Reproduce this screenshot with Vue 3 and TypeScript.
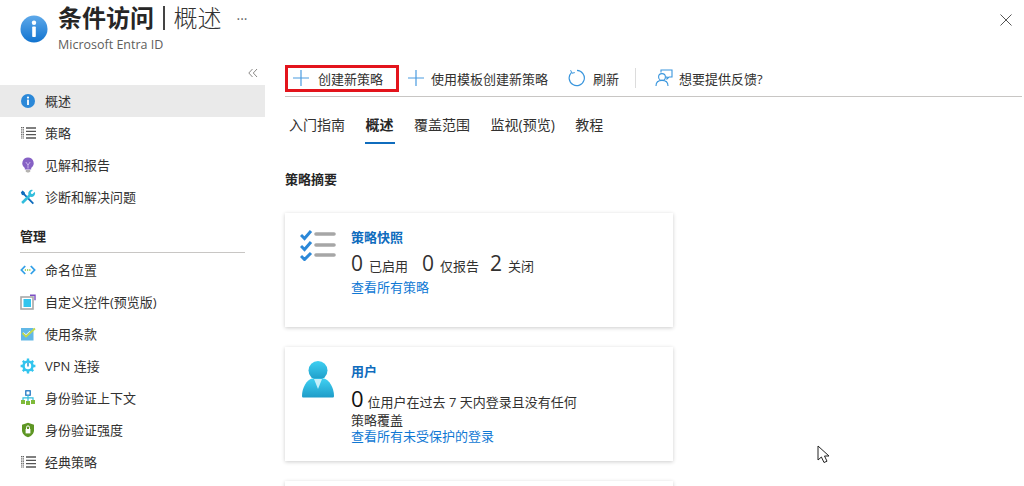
<script setup lang="ts">
const topNav = [
  { label: '概述', icon: 'info', active: true },
  { label: '策略', icon: 'list' },
  { label: '见解和报告', icon: 'bulb' },
  { label: '诊断和解决问题', icon: 'tools' },
]
const manageNav = [
  { label: '命名位置', icon: 'code' },
  { label: '自定义控件(预览版)', icon: 'control' },
  { label: '使用条款', icon: 'terms' },
  { label: 'VPN 连接', icon: 'gear' },
  { label: '身份验证上下文', icon: 'tree' },
  { label: '身份验证强度', icon: 'shield' },
  { label: '经典策略', icon: 'list' },
]
const tabs = ['入门指南', '概述', '覆盖范围', '监视(预览)', '教程']
</script>

<template>
  <div class="page">
    <header class="head">
      <svg class="head-icon" viewBox="0 0 28 28" width="28" height="28">
        <defs>
          <linearGradient id="ig" x1="0" y1="0" x2="0" y2="1">
            <stop offset="0" stop-color="#5ea9ea" /><stop offset="1" stop-color="#1173cf" />
          </linearGradient>
        </defs>
        <circle cx="14" cy="14" r="13.5" fill="url(#ig)" />
        <circle cx="14" cy="7.8" r="2.2" fill="#fff" />
        <rect x="12.200" y="11.500" width="3.600" height="10.500" rx="0.800" fill="#fff" />
      </svg>
      <div class="head-text">
        <div class="title-row">
          <span class="title-b">条件访问</span><span class="title-bar"></span><span class="title-l">概述</span>
          <span class="dots">···</span>
        </div>
        <div class="sub">Microsoft Entra ID</div>
      </div>
      <svg class="close" viewBox="0 0 12 12" width="12" height="12">
        <path d="M.5.5l11 11M11.5.5l-11 11" stroke="#555" stroke-width="1" fill="none" />
      </svg>
    </header>

    <div class="body">
      <aside class="side">
        <div class="collapse">
          <svg viewBox="0 0 10 10" width="10" height="10">
            <path d="M4.500 1L.8 5l3.700 4M9 1L5.300 5 9 9" stroke="#8a8886" fill="none" stroke-width="1" />
          </svg>
        </div>
        <template v-for="group in [topNav, manageNav]" :key="group[0].label">
          <div v-if="group === manageNav" class="section">管理</div>
          <div v-for="item in group" :key="item.label" class="nav" :class="{ active: item.active }">
            <svg class="nav-icon" viewBox="0 0 16 16" width="16" height="16">
              <template v-if="item.icon === 'info'">
                <circle cx="8" cy="8" r="7" fill="#2b88d8" />
                <circle cx="8" cy="4.600" r="1.100" fill="#fff" />
                <rect x="7.100" y="6.600" width="1.800" height="5.400" fill="#fff" />
              </template>
              <template v-else-if="item.icon === 'list'">
                <path d="M6 3h10M6 6.300h10M6 9.600h10M6 13h10" stroke="#555" stroke-width="1.300" />
                <path d="M1 2.500h3M1 4.200h3M1 6h3M1 7.700h3M1 9.400h3M1 11.100h3M1 13h3" stroke="#555" stroke-width=".9" stroke-dasharray="1.500 .5" />
              </template>
              <template v-else-if="item.icon === 'bulb'">
                <path d="M8 .6a5.700 5.700 0 0 0-3.200 10.400V12.400h6.400V11A5.700 5.700 0 0 0 8 .6z" fill="#8661c5" />
                <path d="M5.800 13h4.400v1.200L9 15.400H7l-1.200-1.200z" fill="#b5b3b1" />
                <path d="M5.800 5l2.200 3 2.200-3M8 8v3.500" stroke="#d9c9f2" fill="none" stroke-width=".8" />
              </template>
              <template v-else-if="item.icon === 'tools'">
                <path d="M2.500 1.500l2.200 1.800.4 1.800L14 14l-1.300 1.300L3.800 6.300 2 6 .8 3.400z" fill="#0f6cbd" />
                <path d="M14.800 2.800l-2.300 2.200-1.400-.3-.3-1.400L13 1a3.700 3.700 0 0 0-4.600 4.700L1.200 13l1.800 2 7.400-7.200a3.700 3.700 0 0 0 4.400-5z" fill="#32bedd" />
              </template>
              <template v-else-if="item.icon === 'code'">
                <path d="M5.200 4L1.400 8l3.800 4M10.800 4l3.800 4-3.800 4" stroke="#32a0e8" stroke-width="1.800" fill="none" />
                <path d="M4.800 8h6.400" stroke="#8cc63f" stroke-width="1.300" stroke-dasharray="1.200 1" />
              </template>
              <template v-else-if="item.icon === 'control'">
                <rect x="1" y="3" width="12" height="12" fill="none" stroke="#a8a8a8" stroke-width="1.600" />
                <rect x="3.500" y="5" width="7.500" height="8" fill="#32c5ee" />
                <path d="M10 1.200h5v5" fill="none" stroke="#7c4fc4" stroke-width="1.400" />
              </template>
              <template v-else-if="item.icon === 'terms'">
                <rect x="1" y="2" width="12.500" height="12.500" fill="#62b8e6" />
                <path d="M2.500 7l3.500 3.500L15 2.500" fill="none" stroke="#c3d94a" stroke-width="1.800" />
                <path d="M3.500 6.500l2.500 2.200L10 5" fill="none" stroke="#fff" stroke-width=".8" />
              </template>
              <template v-else-if="item.icon === 'gear'">
                <circle cx="8" cy="8" r="5.800" fill="#32c5ee" />
                <path d="M8 .6v14.800M.6 8h14.800M2.800 2.800l10.400 10.400M13.200 2.800L2.800 13.200" stroke="#32c5ee" stroke-width="2.400" />
                <circle cx="8" cy="8" r="3.200" fill="#fff" />
                <path d="M8 4.800v3.600" stroke="#1a8fc9" stroke-width="1.400" />
              </template>
              <template v-else-if="item.icon === 'tree'">
                <rect x="5.800" y=".8" width="4.400" height="4.400" fill="#fff" stroke="#0f6cbd" stroke-width="1.200" />
                <path d="M8 5v6M3 10V7.800h10V10" fill="none" stroke="#32bedd" stroke-width="1.200" />
                <rect x="1" y="10" width="4" height="4" fill="#7fba3a" />
                <rect x="6" y="11" width="4" height="4" fill="#7fba3a" />
                <rect x="11" y="10" width="4" height="4" fill="#7fba3a" />
              </template>
              <template v-else-if="item.icon === 'shield'">
                <path d="M8 .8l6 2v5.400c0 3.400-2.600 5.800-6 7-3.400-1.200-6-3.600-6-7V2.800z" fill="#5e9624" />
                <path d="M5.600 7h4.800v4.400H5.600z" fill="#fff" />
                <path d="M6.500 7V5.400a1.500 1.500 0 0 1 3 0V7" fill="none" stroke="#fff" stroke-width="1" />
              </template>
            </svg>
            <span>{{ item.label }}</span>
          </div>
        </template>
      </aside>

      <main class="main">
        <div class="toolbar">
          <div class="tool primary">
            <svg viewBox="0 0 16 16" width="16" height="16"><path d="M8 0v16M0 8h16" stroke="#4a9be0" stroke-width="1.200" /></svg>
            <span>创建新策略</span>
          </div>
          <div class="tool t2">
            <svg viewBox="0 0 16 16" width="16" height="16"><path d="M8 0v16M0 8h16" stroke="#4a9be0" stroke-width="1.200" /></svg>
            <span>使用模板创建新策略</span>
          </div>
          <div class="tool t3">
            <svg viewBox="0 0 18 18" width="18" height="18"><path d="M3.400 3.600A7.600 7.600 0 1 0 9 1.400" fill="none" stroke="#3a96dd" stroke-width="1.200" /><path d="M2.600 1.200l1.400 3 2.800-.6" fill="none" stroke="#3a96dd" stroke-width="1" /></svg>
            <span>刷新</span>
          </div>
          <div class="divider"></div>
          <div class="tool t4">
            <svg viewBox="0 0 18 18" width="18" height="18">
              <circle cx="7" cy="8" r="3.400" fill="none" stroke="#3a96dd" stroke-width="1.100" />
              <path d="M1 17c0-3.400 2.400-5.600 6-5.600s6 2.200 6 5.600" fill="none" stroke="#3a96dd" stroke-width="1.100" />
              <path d="M6 3.500V1h11v7h-3l-2 2V8h-1" fill="none" stroke="#3a96dd" stroke-width="1.100" />
            </svg>
            <span>想要提供反馈?</span>
          </div>
        </div>

        <nav class="tabs">
          <div v-for="t in tabs" :key="t" class="tab" :class="{ on: t === '概述' }">{{ t }}</div>
        </nav>

        <h2 class="summary">策略摘要</h2>

        <section class="card">
          <svg class="card-icon" viewBox="0 0 36 32" width="36" height="32">
            <path d="M1 6l3.500 3.500L11 2M1 17l3.500 3.500L11 13M1 27l3.500 3.500L11 24" fill="none" stroke="#2b88d8" stroke-width="3" />
            <path d="M16 5h18M16 16h18M16 26h18" stroke="#a6a6a6" stroke-width="3.600" stroke-linecap="round" />
          </svg>
          <div class="card-body">
            <div class="card-title">策略快照</div>
            <div class="stats">
              <span class="num">0</span><span class="lab l1">已启用</span>
              <span class="num">0</span><span class="lab l2">仅报告</span>
              <span class="num">2</span><span class="lab">关闭</span>
            </div>
            <a class="link">查看所有策略</a>
          </div>
        </section>

        <section class="card user">
          <svg class="card-icon" viewBox="0 0 34 38" width="34" height="38">
            <defs>
              <linearGradient id="ug" x1="0" y1="0" x2="0" y2="1">
                <stop offset="0" stop-color="#3fd0f2" /><stop offset="1" stop-color="#1e9cc8" />
              </linearGradient>
            </defs>
            <circle cx="17" cy="10.500" r="9.500" fill="url(#ug)" />
            <path d="M1 36c0-9 5-16 10-17.500h12C28 20 33 27 33 36c0 1-.6 1.500-1.500 1.500h-29C1.600 37.500 1 37 1 36z" fill="url(#ug)" />
            <path d="M13 19h8l-4 10z" fill="#c6f0fa" />
          </svg>
          <div class="card-body">
            <div class="card-title">用户</div>
            <div class="desc"><span class="num dark">0</span> 位用户在过去 7 天内登录且没有任何</div>
            <div class="desc2">策略覆盖</div>
            <a class="link">查看所有未受保护的登录</a>
          </div>
        </section>

        <section class="card"></section>
      </main>
    </div>

    <svg class="cursor" viewBox="0 0 14 20" width="14" height="20">
      <path d="M1 1v14l3.400-3 2.600 5.500 3-1.300L7.500 11H12z" fill="#fff" stroke="#222" stroke-width="1" />
    </svg>
  </div>
</template>

<style scoped>
.page {
  position: relative;
  width: 1024px;
  height: 486px;
  overflow: hidden;
  background: #fff;
  color: #323130;
  font-family: "Open Sans", "Noto Sans CJK SC", sans-serif;
  font-size: 13px;
}
.head {
  display: flex;
  height: 58px;
  padding: 0 12px 0 20px;
  box-sizing: border-box;
}
.head-icon { margin-top: 15px; }
.head-text { margin-left: 10px; padding-top: 1px; }
.title-row { display: flex; align-items: center; height: 34px; line-height: 34px; font-size: 24px; color: #262626; }
.title-b { font-weight: 700; }
.title-bar { width: 1.5px; height: 24px; background: #444; margin: 0 9px; }
.title-l { font-weight: 300; color: #333; }
.dots { font-size: 14px; color: #666; margin-left: 15px; margin-top: 2px; }
.sub { font-size: 12.500px; line-height: 14px; color: #605e5c; margin-top: 3px; }
.close { margin-left: auto; margin-top: 14px; }
.body { display: flex; }
.side { width: 265px; flex: none; }
.collapse { height: 27px; display: flex; justify-content: flex-end; align-items: center; padding: 2px 7px 0 0; box-sizing: border-box; }
.nav {
  display: flex;
  align-items: center;
  height: 32px;
  padding-left: 20px;
  gap: 9px;
  color: #323130;
  line-height: 1;
}
.nav.active { background: #eaeaea; }
.nav-icon { flex: none; }
.section {
  margin: 9px 20px 1px;
  height: 30px;
  line-height: 28px;
  border-bottom: 1px solid #c8c6c4;
  font-weight: 600;
  color: #262626;
}
.main { flex: 1; padding: 4px 2px 0 20px; min-width: 0; }
.toolbar {
  display: flex;
  align-items: center;
  height: 35px;
  box-sizing: border-box;
  padding-bottom: 2px;
  border-bottom: 1px solid #c8c6c4;
}
.tool { display: flex; align-items: center; color: #323130; }
.primary {
  width: 114px;
  height: 27px;
  box-sizing: border-box;
  border: 3px solid #e3141c;
  padding-left: 5px;
  gap: 9px;
}
.t2 { margin-left: 9px; gap: 7px; }
.t3 { margin-left: 20px; gap: 7px; }
.t4 { gap: 6px; }
.divider { width: 1px; height: 20px; background: #dcdcdc; margin: 0 19px 0 16px; }
.tabs { display: flex; height: 46px; margin-left: 4px; gap: 20.500px; }
.tab { height: 47px; line-height: 56px; box-sizing: border-box; font-size: 14px; color: #323130; white-space: nowrap; }
.tab.on { font-weight: 600; color: #262626; border-bottom: 2px solid #0f6cbd; margin: 0 -1px; padding: 0 1px; }
.summary { margin: 27px 0 0; font-size: 13px; font-weight: 600; line-height: 18px; color: #262626; }
.card {
  display: flex;
  width: 388px;
  height: 114px;
  margin-top: 20px;
  box-sizing: border-box;
  background: #fff;
  box-shadow: 0 1px 4px rgba(0, 0, 0, .2);
  padding: 16px 0 0 15px;
}
.summary + .card { margin-top: 25px; }
.card-body { margin-left: 15px; display: flex; flex-direction: column; align-items: flex-start; }
.card-title { font-size: 13px; font-weight: 600; color: #0f6cbd; line-height: 16px; }
.stats { display: flex; align-items: baseline; margin-top: 4px; height: 30px; }
.num { font-size: 21px; color: #323130; font-weight: 400; line-height: 28px; margin: 0 6px 0 0; }
.lab { font-size: 13px; }
.l1 { margin-right: 14px; }
.l2 { margin-right: 11px; }
.link { color: #0f78d4; font-size: 13px; line-height: 16px; }
.user { padding: 14px 0 0 16px; }
.user .card-icon { margin-top: -1px; }
.user .card-body { margin-left: 16px; }
.user .card-title { margin-top: 2px; }
.desc { font-size: 13px; margin-top: 10px; height: 18px; line-height: 18px; display: flex; align-items: baseline; white-space: nowrap; }
.desc .dark { color: #111; font-size: 22px; line-height: 18px; margin: 0 4px 0 0; }
.desc2 { font-size: 13px; line-height: 16px; margin-top: 5px; }
.cursor { position: absolute; left: 817px; top: 445px; }
</style>
